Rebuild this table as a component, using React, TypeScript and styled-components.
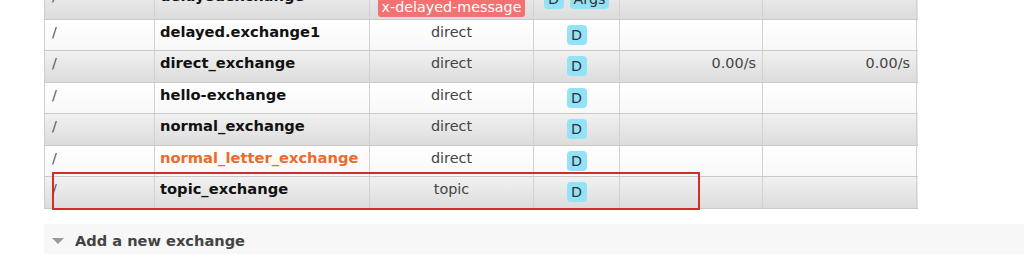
import React from 'react';
import styled, { createGlobalStyle } from 'styled-components';

const GlobalStyle = createGlobalStyle`
  body {
    margin: 0;
    background: #fff;
    font-family: "DejaVu Sans", Verdana, sans-serif;
    overflow: hidden;
  }
`;

const Page = styled.div`
  height: 259px;
  padding-left: 44px;
  overflow: hidden;
`;

const TableWrap = styled.div`
  position: relative;
  width: 873px;
  margin-top: -16px;
  border-left: 1px solid #cfcfcf;
`;

const Row = styled.div<{ $alt: boolean; $h: number }>`
  display: grid;
  grid-template-columns: 110px 215px 164px 86px 143px 154px;
  height: ${(p) => p.$h}px;
  box-sizing: border-box;
  border-bottom: 1px solid #c9c9c9;
  background: ${(p) =>
    p.$alt
      ? 'linear-gradient(#f1f1f1, #dcdcdc)'
      : 'linear-gradient(#ffffff, #f8f8f8)'};
`;

const Cell = styled.div<{ $align?: 'left' | 'center' | 'right' }>`
  box-sizing: border-box;
  border-right: 1px solid #d2d2d2;
  padding: 4px 6px 0 6px;
  font-size: 14.4px;
  color: #444;
  text-align: ${(p) => p.$align || 'left'};
  white-space: nowrap;
  overflow: hidden;
`;

const VhostCell = styled(Cell)`
  padding-left: 7px;
  color: #555;
`;

const NameCell = styled(Cell)<{ $orange?: boolean }>`
  padding-left: 5px;
  padding-top: 3px;
  font-size: 14.7px;
  font-weight: bold;
  color: ${(p) => (p.$orange ? '#ee6a2b' : '#111')};
`;

const FeatureCell = styled(Cell)`
  display: flex;
  justify-content: center;
  align-items: flex-start;
  gap: 6px;
  padding-top: 5px;
`;

const Badge = styled.span`
  display: inline-block;
  min-width: 20px;
  height: 20px;
  box-sizing: border-box;
  padding: 0 4px;
  line-height: 21px;
  border-radius: 4px;
  background: #93e3f8;
  color: #333;
  font-size: 14.3px;
  text-align: center;
`;

const TypeBadge = styled.span`
  display: inline-block;
  margin-top: 9px;
  height: 20px;
  line-height: 21px;
  padding: 0 4px;
  border-radius: 3px;
  background: #f27272;
  color: #fff;
  font-size: 14.3px;
`;

const Highlight = styled.div`
  position: absolute;
  left: 7px;
  top: 188px;
  width: 648px;
  height: 38px;
  box-sizing: border-box;
  border: 2px solid #d42a2a;
  pointer-events: none;
`;

const Section = styled.div`
  margin-top: 15px;
  height: 30px;
  background: #f7f7f7;
  display: flex;
  align-items: center;
  padding-left: 8px;
  padding-top: 2px;
  box-sizing: border-box;
  gap: 11px;
`;

const Arrow = styled.span`
  width: 0;
  height: 0;
  border-left: 6px solid transparent;
  border-right: 6px solid transparent;
  border-top: 6px solid #9a9a9a;
  margin-top: 2px;
`;

const SectionTitle = styled.h2`
  margin: 0;
  font-size: 14.6px;
  font-weight: bold;
  color: #444;
`;

type Exchange = {
  name: string;
  type: string;
  rateIn?: string;
  rateOut?: string;
  orange?: boolean;
};

const exchanges: Exchange[] = [
  { name: 'delayed.exchange1', type: 'direct' },
  { name: 'direct_exchange', type: 'direct', rateIn: '0.00/s', rateOut: '0.00/s' },
  { name: 'hello-exchange', type: 'direct' },
  { name: 'normal_exchange', type: 'direct' },
  { name: 'normal_letter_exchange', type: 'direct', orange: true },
  { name: 'topic_exchange', type: 'topic' },
];

export default function App() {
  return (
    <Page>
      <GlobalStyle />
      <TableWrap>
        <Row $alt $h={36}>
          <VhostCell>/</VhostCell>
          <NameCell>delayedexchange</NameCell>
          <Cell $align="center">
            <TypeBadge>x-delayed-message</TypeBadge>
          </Cell>
          <FeatureCell>
            <Badge>D</Badge>
            <Badge>Args</Badge>
          </FeatureCell>
          <Cell />
          <Cell />
        </Row>
        {exchanges.map((ex, i) => {
          const alt = i % 2 === 1;
          return (
            <Row key={ex.name} $alt={alt} $h={alt ? 32 : 31}>
              <VhostCell>/</VhostCell>
              <NameCell $orange={ex.orange}>{ex.name}</NameCell>
              <Cell $align="center">{ex.type}</Cell>
              <FeatureCell>
                <Badge>D</Badge>
              </FeatureCell>
              <Cell $align="right">{ex.rateIn}</Cell>
              <Cell $align="right">{ex.rateOut}</Cell>
            </Row>
          );
        })}
        <Highlight />
      </TableWrap>
      <Section>
        <Arrow />
        <SectionTitle>Add a new exchange</SectionTitle>
      </Section>
    </Page>
  );
}
